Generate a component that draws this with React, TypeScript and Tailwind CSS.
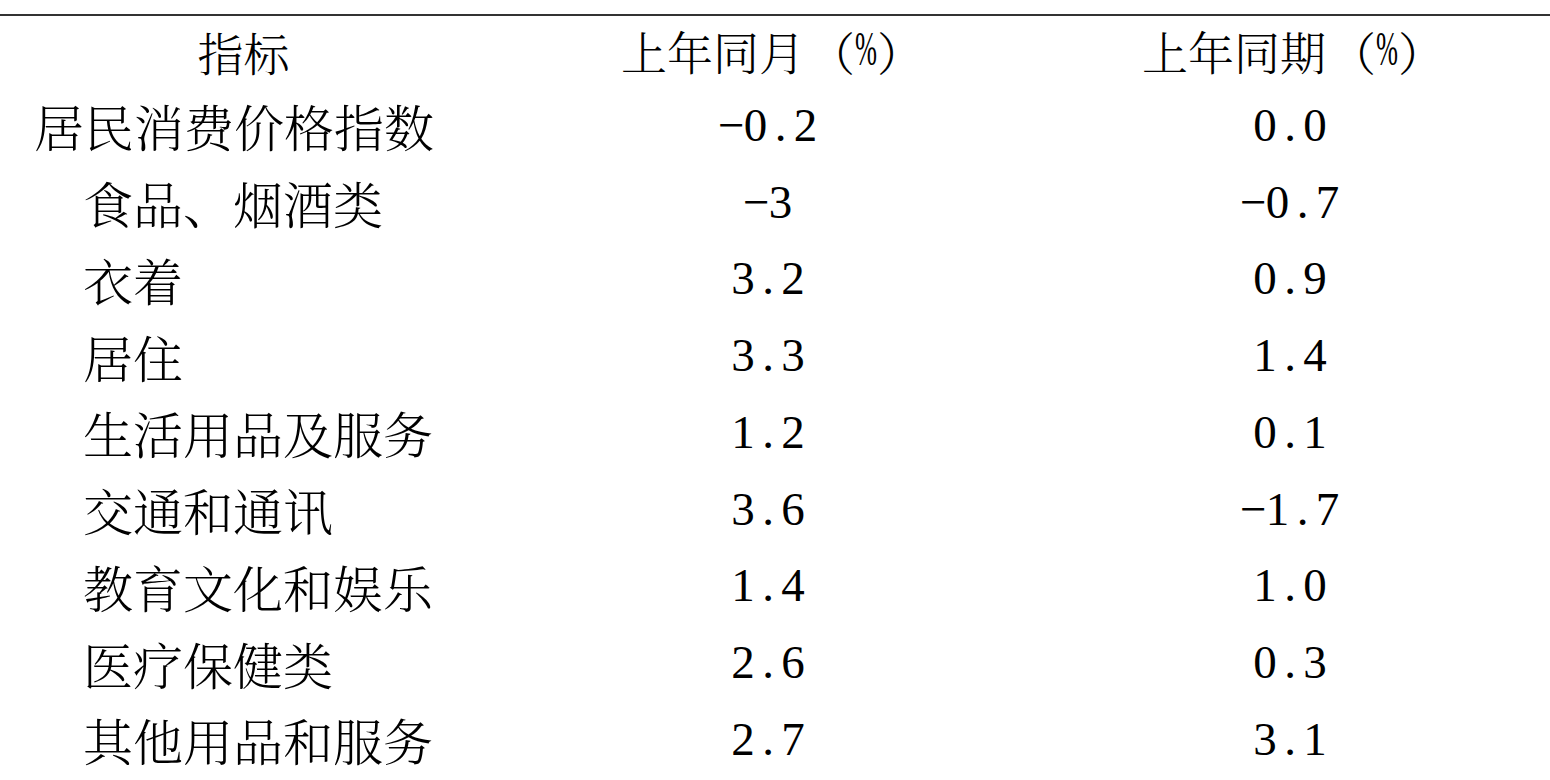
import React from "react";

const rows = [
    { name: "居民消费价格指数", month: "−0.2", period: "0.0", top: true },
    { name: "食品、烟酒类", month: "−3", period: "−0.7" },
    { name: "衣着", month: "3.2", period: "0.9" },
    { name: "居住", month: "3.3", period: "1.4" },
    { name: "生活用品及服务", month: "1.2", period: "0.1" },
    { name: "交通和通讯", month: "3.6", period: "−1.7" },
    { name: "教育文化和娱乐", month: "1.4", period: "1.0" },
    { name: "医疗保健类", month: "2.6", period: "0.3" },
    { name: "其他用品和服务", month: "2.7", period: "3.1" },
];

const cjk = { fontFamily: '"Noto Serif CJK SC", "Noto Sans CJK SC", serif' };
const num = { fontFamily: '"Liberation Serif", serif' };

// half-width cells so "0. 2" spaces like the original song-ti digits
const Num = ({ value }: { value: string }) => (
    <span className="inline-flex text-[47px] leading-none" style={num}>
        {value.split("").map((c, i) => (
            <span key={i} className="inline-block w-[25px] text-center">{c}</span>
        ))}
    </span>
);

const Header = ({ label }: { label: string }) => (
    <span className="inline-flex items-center text-[46px] leading-none font-light" style={cjk}>
        {label}<span className="ml-[4px]">（</span>
        <span className="inline-block text-[48px] scale-x-[0.55] mx-[-9px] -translate-y-[1px]" style={num}>%</span>
        <span>）</span>
    </span>
);

export default function App() {
    return (
        <div className="w-[1550px] h-[780px] bg-white text-black overflow-hidden pt-[14px]">
            <div className="border-t-2 border-[#333333]">
                <div className="grid grid-cols-[487px_562px_482px] h-[71px] pb-[1px] items-center">
                    <div className="text-center text-[46px] leading-none font-light" style={cjk}>指标</div>
                    <div className="text-center pl-[8px]"><Header label="上年同月" /></div>
                    <div className="text-center pl-[6px]"><Header label="上年同期" /></div>
                </div>
                {rows.map((r, i) => (
                    <div key={i} className="grid grid-cols-[487px_562px_482px] h-[76.75px] items-center">
                        <div
                            className={`text-[50px] leading-none font-light ${r.top ? "pl-[34px]" : "pl-[83px]"}`}
                            style={cjk}
                        >
                            {r.name}
                        </div>
                        <div className="text-center"><Num value={r.month} /></div>
                        <div className="text-center"><Num value={r.period} /></div>
                    </div>
                ))}
            </div>
        </div>
    );
}
